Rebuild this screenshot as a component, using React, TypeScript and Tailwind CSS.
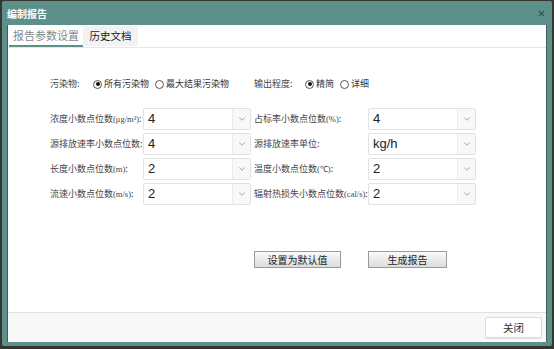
import { ChevronDown, X } from "lucide-react";

const cjk = "font-['Noto_Sans_CJK_SC','Noto_Sans',sans-serif]";
const serif = "font-['Liberation_Serif',serif] text-[8.5px]";

function Radio({ checked, label }: { checked?: boolean; label: string }) {
  return (
    <label className="flex items-center gap-[2px]">
      <span className="w-[9px] h-[9px] rounded-full border border-[#555] bg-white flex items-center justify-center">
        {checked && <span className="w-[4px] h-[4px] rounded-full bg-[#111]" />}
      </span>
      <span className="text-[9px] text-[#333]">{label}</span>
    </label>
  );
}

function Select({ value }: { value: string }) {
  return (
    <div className="w-[108px] h-[22px] shrink-0 flex border border-[#e2e2e2] rounded-[2px] bg-white">
      <span className="flex-1 pl-[4px] text-[13px] leading-[20px] text-[#222] font-['Liberation_Sans',sans-serif]">
        {value}
      </span>
      <span className="w-[18px] flex items-center justify-center bg-[#f8f8f8] border-l border-[#ececec]">
        <ChevronDown className="w-[10px] h-[10px] text-[#888]" strokeWidth={1.8} />
      </span>
    </div>
  );
}

function Label({ text, unit, w }: { text: string; unit?: string; w: string }) {
  return (
    <span className={`${w} shrink-0 text-[9px] text-[#444] whitespace-nowrap`}>
      {text}
      {unit && <span className={serif}>({unit})</span>}:
    </span>
  );
}

export default function App() {
  return (
    <div className={`w-[554px] h-[349px] bg-[#34362f] pl-[2px] pt-[1px] pr-[2px] pb-[3px] ${cjk}`}>
      <div className="h-full flex flex-col bg-[#5d8f8b] rounded-[2px] px-[5px] pb-[4px]">
        {/* Title */}
        <div className="h-[24px] flex items-center justify-between">
          <span className="text-[10px] font-bold text-white">编制报告</span>
          <X className="w-[9px] h-[9px] text-[#3a5654] mr-[1px]" strokeWidth={3} />
        </div>
        <div className="flex-1 flex flex-col bg-white border-l border-r border-[#3f5f5c]">
          {/* Tabs */}
          <div className="h-[23px] flex items-end border-b border-[#e6e6e6]">
            <div className="ml-[1px] w-[74px] h-[22px] flex items-center justify-center border-b-2 border-[#5d8f8b] text-[11px] text-[#7d8d8c]">
              报告参数设置
            </div>
            <div className="w-[55px] h-[20px] mb-[1px] flex items-center justify-center bg-[#f2f2f2] text-[10.5px] text-[#222]">
              历史文档
            </div>
          </div>
          {/* Content */}
          <div className="flex-1 pl-[42px] pt-[28px]">
            <div className="flex items-center h-[16px]">
              <div className="w-[204px] flex items-center">
                <span className="w-[43px] text-[9px] text-[#444]">污染物:</span>
                <div className="flex items-center gap-[6px]">
                  <Radio checked label="所有污染物" />
                  <Radio label="最大结果污染物" />
                </div>
              </div>
              <span className="w-[51px] text-[9px] text-[#444]">输出程度:</span>
              <div className="flex items-center gap-[6px]">
                <Radio checked label=" 精简" />
                <Radio label="详细" />
              </div>
            </div>
            <div className="mt-[16px] flex flex-col gap-[3px]">
              <div className="flex items-center">
                <Label w="w-[93px]" text="浓度小数点位数" unit="μg/m³" />
                <Select value="4" />
                <Label w="w-[114px] ml-[3px]" text="占标率小数点位数" unit="%" />
                <Select value="4" />
              </div>
              <div className="flex items-center">
                <Label w="w-[93px]" text="源排放速率小数点位数" />
                <Select value="4" />
                <Label w="w-[114px] ml-[3px]" text="源排放速率单位" />
                <Select value="kg/h" />
              </div>
              <div className="flex items-center">
                <Label w="w-[93px]" text="长度小数点位数" unit="m" />
                <Select value="2" />
                <Label w="w-[114px] ml-[3px]" text="温度小数点位数" unit="℃" />
                <Select value="2" />
              </div>
              <div className="flex items-center">
                <Label w="w-[93px]" text="流速小数点位数" unit="m/s" />
                <Select value="2" />
                <Label w="w-[114px] ml-[3px]" text="辐射热损失小数点位数" unit="cal/s" />
                <Select value="2" />
              </div>
            </div>
            <div className="mt-[46px] ml-[204px] flex gap-[27px]">
              <button className="w-[87px] h-[17px] border border-[#9a9a9a] bg-gradient-to-b from-[#fafafa] to-[#dcdcdc] text-[10px] text-[#222] leading-none">
                设置为默认值
              </button>
              <button className="w-[79px] h-[17px] border border-[#9a9a9a] bg-gradient-to-b from-[#fafafa] to-[#dcdcdc] text-[10px] text-[#222] leading-none">
                生成报告
              </button>
            </div>
          </div>
          {/* Footer */}
          <div className="h-[30px] flex items-center justify-end pr-[4px] bg-[#f8f8f8] border-t border-[#e0e0e0]">
            <button className="w-[57px] h-[21px] border border-[#dcdcdc] rounded-[2px] bg-white text-[10.5px] text-[#333] shadow-[0_1px_1px_rgba(0,0,0,0.08)]">
              关闭
            </button>
          </div>
        </div>
      </div>
    </div>
  );
}
